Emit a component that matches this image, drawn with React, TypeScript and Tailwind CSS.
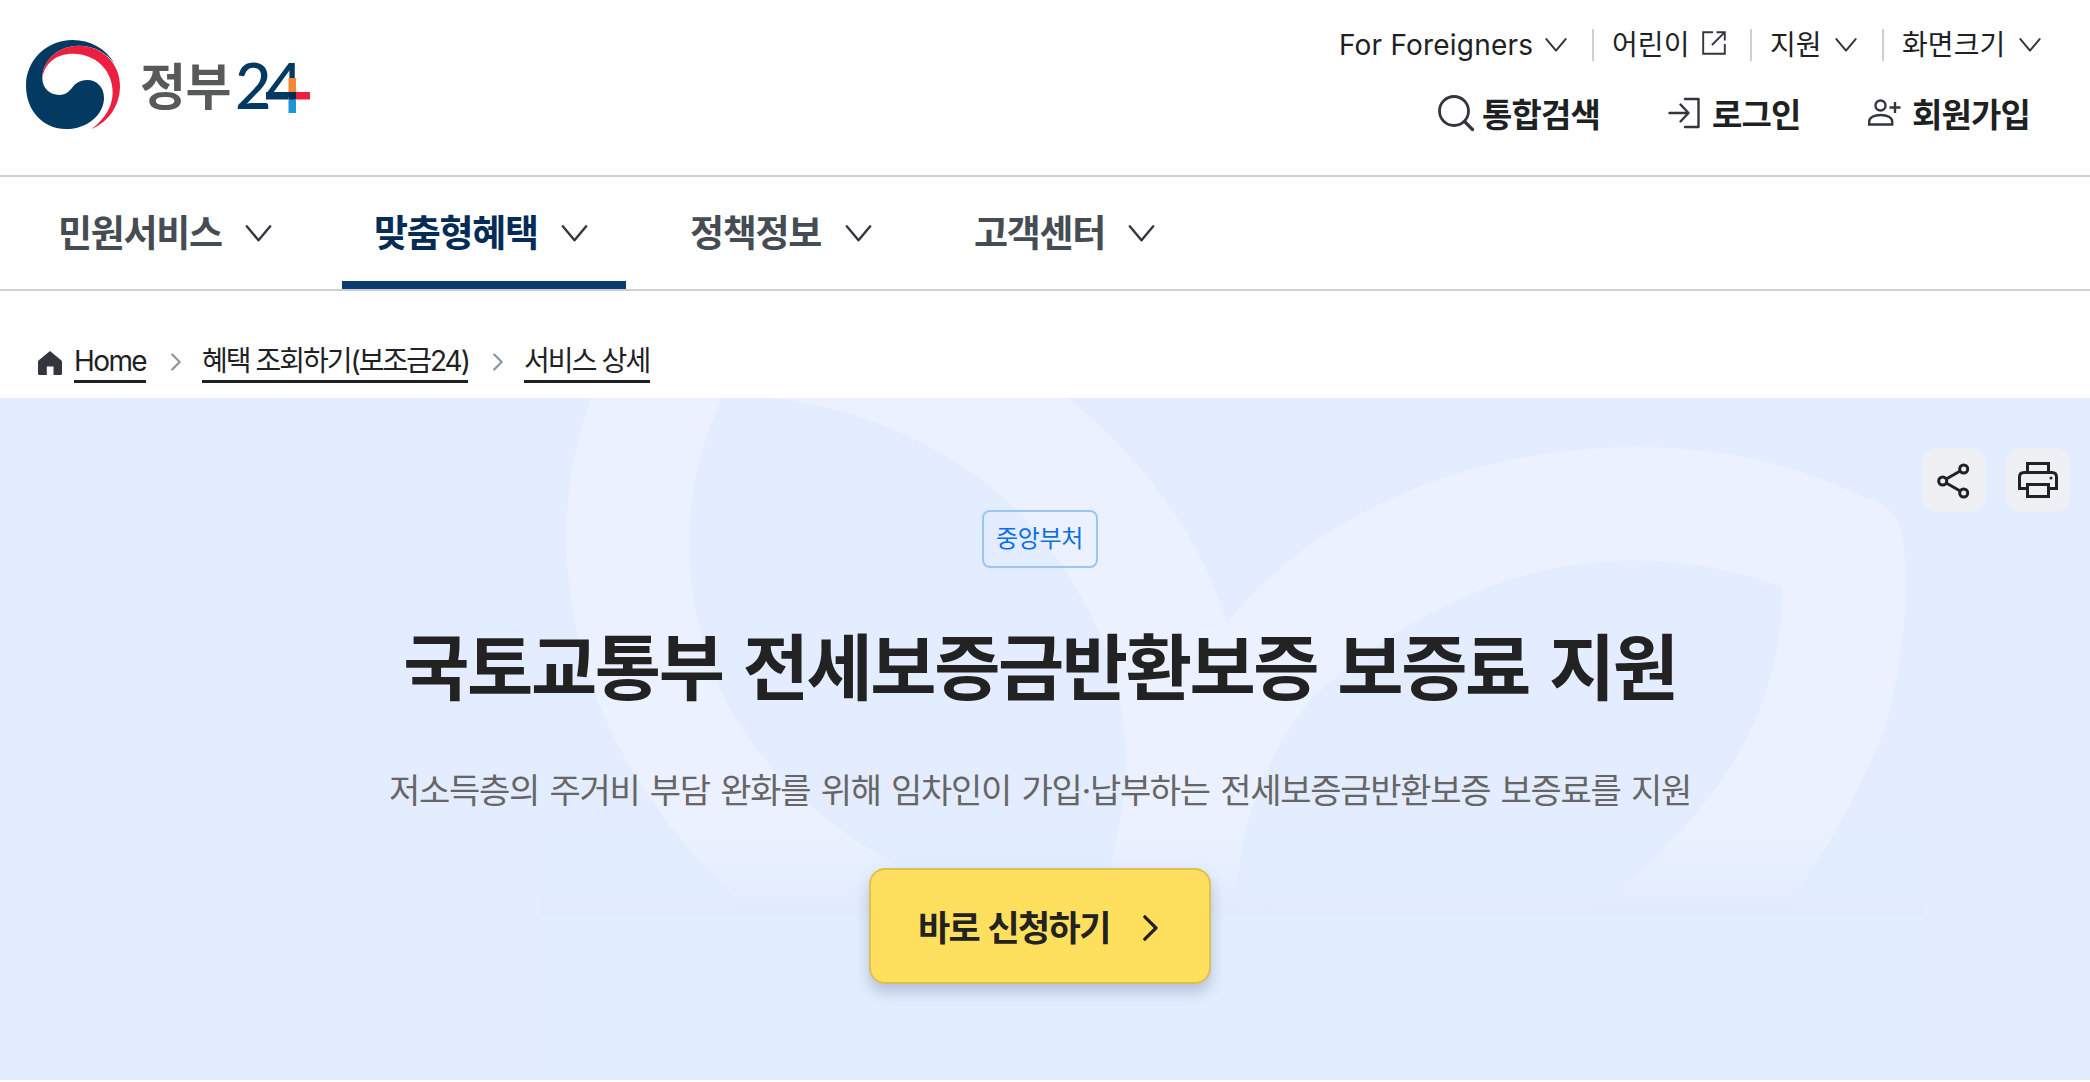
import React from "react";

type IconProps = { className?: string };

const ChevronDown: React.FC<IconProps> = ({ className }) => (
  <svg className={className} viewBox="0 0 26 17" fill="none" stroke="#33363d" strokeLinecap="round" strokeLinejoin="round">
    <path d="M1.3 1.3 13 15.3 24.7 1.3" strokeWidth="2.4" />
  </svg>
);

const ChevronRight: React.FC<IconProps> = ({ className }) => (
  <svg className={className} viewBox="0 0 15 26" fill="none" stroke="currentColor" strokeLinecap="round" strokeLinejoin="round">
    <path d="M1.8 1.8 13 13 1.8 24.2" strokeWidth="3.2" />
  </svg>
);

const Logo: React.FC = () => (
  <svg className="block h-[130px] w-[340px]" viewBox="0 20 340 130">
    <g transform="translate(0 20) scale(.33333)">
      <path
        fill="#043962"
        d="M345 133C318 85 270 60 218 60C140 60 78 120 78 197C78 272 130 327 198 327C262 327 312 284 312 233C312 202 290 180 262 180C238 180 225 191 215 205C205 218 194 225 178 225C149 225 127 204 127 175C127 120 176 77 236 77C282 77 320 98 345 133Z"
      />
      <path
        fill="#ec1f40"
        d="M127 175C127 120 176 77 236 77C306 77 360 129 360 197C360 254 328 304 275 327C316 296 338 258 338 217C338 150 286 101 219 101C168 101 133 130 127 175Z"
      />
    </g>
    <text x="140" y="105" fontSize="50" fontWeight="700" fill="#58595b" letterSpacing="-0.5" fontFamily="'Noto Sans CJK KR', sans-serif">
      정부
    </text>
    <text x="235" y="109" fontSize="63" fontWeight="500" fill="#043962" letterSpacing="-5" fontFamily="Lato, sans-serif">
      24
    </text>
    <rect x="288.5" y="78" width="7.5" height="14" fill="#f58634" />
    <rect x="266" y="92" width="22.5" height="7.5" fill="#043962" />
    <rect x="288.5" y="92" width="7.5" height="7.5" fill="#022c52" />
    <rect x="296" y="92" width="14" height="7.5" fill="#ec1f40" />
    <rect x="288.5" y="99.5" width="7.5" height="13.5" fill="#1c96d4" />
  </svg>
);

const Divider: React.FC = () => <span className="h-8 w-0.5 bg-[#cdd1d5]" />;

const UtilityLinks: React.FC = () => (
  <ul className="flex h-10 items-center text-[28px] leading-10 text-[#1e2124]">
    <li className="flex items-center">
      <a href="#" className="w-[192px] whitespace-nowrap tracking-[0.2px]">For Foreigners</a>
      <ChevronDown className="ml-3.5 mr-[25px] h-3.5 w-[22px]" />
    </li>
    <Divider />
    <li className="flex items-center pl-[18px]">
      <a href="#" className="w-[75px] whitespace-nowrap tracking-[0.1px]">어린이</a>
      <svg className="mb-1 ml-[15px] mr-6 h-6 w-6" viewBox="0 0 24 24" fill="none" stroke="#33363d" strokeWidth="1.9">
        <path d="M11 1.2H1.2V22.8H22.8V13" />
        <path d="M14.5 1.2H22.8V9.5M22.8 1.2 10 14" />
      </svg>
    </li>
    <Divider />
    <li className="flex items-center pl-[18px]">
      <a href="#" className="w-[51px] whitespace-nowrap tracking-[0.1px]">지원</a>
      <ChevronDown className="ml-3.5 mr-[25px] h-3.5 w-[22px]" />
    </li>
    <Divider />
    <li className="flex items-center pl-[18px]">
      <a href="#" className="w-[102px] whitespace-nowrap tracking-[0.1px]">화면크기</a>
      <ChevronDown className="ml-[15px] h-3.5 w-[22px]" />
    </li>
  </ul>
);

const AccountLinks: React.FC = () => (
  <div className="mr-[13px] flex h-12 items-center text-[33px] font-bold leading-[48px] tracking-[-0.9px] text-[#1e2124]">
    <button type="button" className="flex items-center">
      <svg className="h-10 w-10" viewBox="0 0 40 40" fill="none" stroke="#33363d" strokeLinecap="round">
        <circle cx="18" cy="18" r="14.5" strokeWidth="2.8" />
        <path d="m28.5 28.5 8 8" strokeWidth="3.2" />
      </svg>
      <span className="ml-1.5 w-[118px] whitespace-nowrap pt-1 text-left">통합검색</span>
    </button>
    <button type="button" className="ml-[68px] flex items-center">
      <svg className="h-8 w-8" viewBox="0 0 32 32" fill="none" stroke="#33363d" strokeWidth="2.4" strokeLinecap="round" strokeLinejoin="round">
        <path d="M17 2H30.5V30H17" />
        <path d="M1.5 16H20M12.5 7.5 20.5 16 12.5 24.5" />
      </svg>
      <span className="ml-3 w-[88px] whitespace-nowrap pt-1 text-left">로그인</span>
    </button>
    <button type="button" className="ml-[67px] flex items-center">
      <svg className="h-[34px] w-[34px]" viewBox="0 0 34 34" fill="none" stroke="#33363d" strokeWidth="2.4">
        <circle cx="13.5" cy="9.5" r="5" />
        <path d="M2.2 28.5V25.5C2.2 21.5 7 19 13.7 19S25.2 21.5 25.2 25.5V28.5Z" />
        <path d="M28 6V17M22.5 11.5H33.5" />
      </svg>
      <span className="ml-[11px] w-[116px] whitespace-nowrap pt-1 text-left">회원가입</span>
    </button>
  </div>
);

const menu = [
  { label: "민원서비스", width: "w-[164px]", active: false },
  { label: "맞춤형혜택", width: "w-[164px]", active: true },
  { label: "정책정보", width: "w-[132px]", active: false },
  { label: "고객센터", width: "w-[131px]", active: false },
];

const MainNav: React.FC = () => (
  <nav className="flex h-[114px] gap-8 border-b-2 border-[#cdd1d5] pl-[26px]">
    {menu.map((item) => (
      <a
        key={item.label}
        href="#"
        className={`flex items-center gap-4 border-b-8 px-8 pt-2 ${
          item.active ? "border-[#0b3b70] text-[#052b57]" : "border-transparent text-[#464c53]"
        }`}
      >
        <span className={`${item.width} whitespace-nowrap pt-0.5 text-[37px] font-bold leading-[56px] tracking-[-1.3px]`}>
          {item.label}
        </span>
        <span className="flex w-10 justify-center">
          <ChevronDown className="h-[17px] w-[27px]" />
        </span>
      </a>
    ))}
  </nav>
);

const Breadcrumb: React.FC = () => (
  <div className="flex h-[107px] items-start pl-[38px] pt-[51px] text-[28px] leading-[37px] text-[#1e2124]">
    <svg className="mt-[9px] h-6 w-6" viewBox="0 0 24 24" fill="#33363d">
      <path d="M12 0 23.5 9.5Q24 10 24 11V22.5Q24 24 22.5 24H15.5V15.5H8.8V24H1.5Q0 24 0 22.5V11Q0 10 .5 9.5Z" />
    </svg>
    <a href="#" className="ml-3 w-[72px] whitespace-nowrap border-b-[3px] border-[#1e2124] pt-px tracking-[-1.6px]">Home</a>
    <ChevronRight className="ml-[25px] mr-[21px] mt-[11px] h-[18px] w-2.5 stroke-[4px] text-[#8a949e]" />
    <a href="#" className="w-[266px] whitespace-nowrap border-b-[3px] border-[#1e2124] pt-px tracking-[-2px]">혜택 조회하기(보조금24)</a>
    <ChevronRight className="ml-[25px] mr-[21px] mt-[11px] h-[18px] w-2.5 stroke-[4px] text-[#8a949e]" />
    <a href="#" className="w-[126px] whitespace-nowrap border-b-[3px] border-[#1e2124] pt-px tracking-[-1.9px]">서비스 상세</a>
  </div>
);

// Decorative leaves behind the hero text
const HeroPattern: React.FC = () => (
  <svg className="absolute left-0 top-0 h-[682px] w-[2090px]" viewBox="0 398 2090 682" aria-hidden="true">
    <defs>
      <linearGradient id="leafFade" gradientUnits="userSpaceOnUse" x1="0" y1="830" x2="0" y2="912">
        <stop offset="0" stopColor="#ebf1fe" />
        <stop offset="1" stopColor="#ebf1fe" stopOpacity="0" />
      </linearGradient>
      <linearGradient id="panelFade" gradientUnits="userSpaceOnUse" x1="0" y1="820" x2="0" y2="914">
        <stop offset="0" stopColor="#e1edff" stopOpacity="0" />
        <stop offset="0.3" stopColor="#e1edff" />
        <stop offset="0.6" stopColor="#e1edff" />
        <stop offset="1" stopColor="#e2ebfe" />
      </linearGradient>
    </defs>
    <rect x="541" y="820" width="1382" height="94" fill="url(#panelFade)" />
    <rect x="541" y="914" width="1382" height="160" fill="#e1eeff" />
    <path
      fill="url(#leafFade)"
      fillRule="evenodd"
      d="M591 398C561 482 558 569 584 657C608 748 665 835 753 914H1782C1828 851 1865 780 1886 726C1903 660 1911 590 1902 533C1899 519 1891 508 1873 500L1838 486C1774 458 1708 447 1634 447C1478 447 1318 508 1227 623C1202 539 1145 461 1068 398Z
      M722 398C681 488 680 576 710 664C742 754 815 823 913 874L1000 914H1100Q1104 892 1109 869C1122 825 1129 780 1125 735C1116 655 1086 582 1010 503C940 442 855 406 770 398Z
      M1782 587C1733 570 1690 561 1634 560.5C1505 560 1395 622 1310 700C1257 768 1238 836 1235 914H1588C1700 829 1784 726 1782 587Z"
    />
  </svg>
);

const Hero: React.FC = () => (
  <section className="relative h-[682px] bg-[#e3edff]">
    <HeroPattern />
    <div className="absolute right-5 top-[50px] flex gap-5">
      <button type="button" aria-label="공유" className="flex h-16 w-16 items-center justify-center rounded-2xl bg-[#eff0f4]">
        <svg className="h-10 w-10" viewBox="0 0 40 40" fill="none" stroke="#222" strokeWidth="3">
          <circle cx="29.7" cy="9" r="4" />
          <circle cx="8.7" cy="21" r="4" />
          <circle cx="29.7" cy="33" r="4" />
          <path d="M12.2 19 26.2 11M12.2 23 26.2 31" />
        </svg>
      </button>
      <button type="button" aria-label="인쇄" className="flex h-16 w-16 items-center justify-center rounded-2xl bg-[#eff0f4]">
        <svg className="h-10 w-10" viewBox="0 0 40 40" fill="none" stroke="#222" strokeWidth="3">
          <path d="M9.5 12V3.5H30.5V12" />
          <path d="M9.5 28.5H1.5V17Q1.5 12.5 6 12.5H34Q38.5 12.5 38.5 17V28.5H30.5" />
          <path d="M9.5 24.5H30.5V36.5H9.5Z" />
          <circle cx="33" cy="18" r="1.5" fill="#222" stroke="none" />
        </svg>
      </button>
    </div>
    <div className="relative flex w-[2080px] flex-col items-center pt-28">
      <span className="flex h-[58px] w-[116px] items-center justify-center whitespace-nowrap rounded-lg border-2 border-[#9ac6f2] pr-px text-2xl tracking-[-0.3px] text-[#0b6fe4]">
        중앙부처
      </span>
      <h1 className="mt-[46px] whitespace-nowrap text-[72px] font-bold leading-[108px] tracking-[-2.4px] text-[#222] [word-spacing:5.5px]">
        국토교통부 전세보증금반환보증 보증료 지원
      </h1>
      <p className="mt-11 whitespace-nowrap text-[34px] leading-[50px] tracking-[-1.3px] text-[#666] [word-spacing:2.2px]">
        저소득층의 주거비 부담 완화를 위해 임차인이 가입·납부하는 전세보증금반환보증 보증료를 지원
      </p>
      <button
        type="button"
        className="mt-[52px] flex h-[116px] w-[342px] items-center rounded-2xl border-2 border-[#dcc054] bg-[#ffdf5e] pl-[47px] text-[#222] shadow-[0_8px_14px_rgba(80,90,120,0.3)]"
      >
        <span className="w-[188px] whitespace-nowrap pt-[3px] text-left text-[35px] font-bold leading-[52px] tracking-[-1.6px] [word-spacing:1.5px]">바로 신청하기</span>
        <ChevronRight className="ml-[37px] mt-1 h-[26px] w-[15px]" />
      </button>
    </div>
  </section>
);

const App: React.FC = () => {
  return (
    <div className="min-h-[1082px] w-[2090px] overflow-hidden bg-white font-['Inter','Noto_Sans_CJK_KR',sans-serif]">
      <header>
        <div className="flex h-[177px] justify-between border-b-2 border-[#cdd1d5] pr-[49px]">
          <h1 className="pt-5">
            <Logo />
          </h1>
          <div className="flex flex-col items-end gap-6 pt-[25px]">
            <UtilityLinks />
            <AccountLinks />
          </div>
        </div>
        <MainNav />
      </header>
      <Breadcrumb />
      <Hero />
    </div>
  );
};

export default App;
